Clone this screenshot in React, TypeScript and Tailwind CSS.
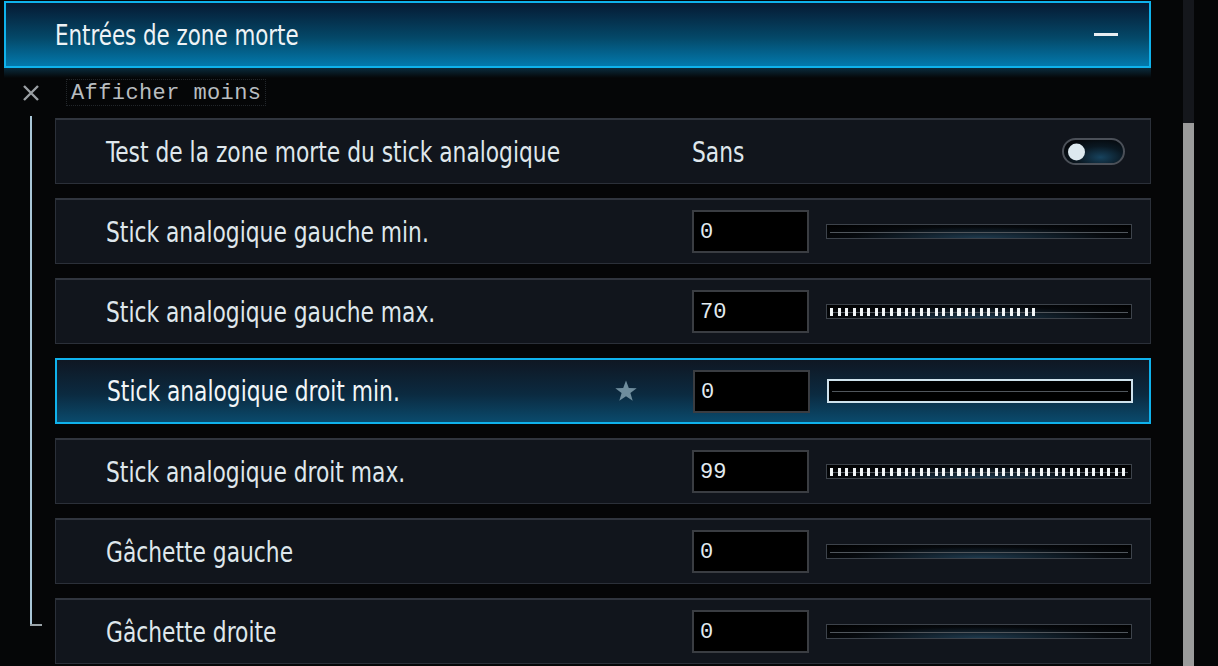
import React from "react";

const rows: { label: string; value: string; fill: number; kind?: "toggle"; active?: boolean }[] = [
  { label: "Test de la zone morte du stick analogique", value: "Sans", fill: 0, kind: "toggle" },
  { label: "Stick analogique gauche min.", value: "0", fill: 0 },
  { label: "Stick analogique gauche max.", value: "70", fill: 68 },
  { label: "Stick analogique droit min.", value: "0", fill: 0, active: true },
  { label: "Stick analogique droit max.", value: "99", fill: 98 },
  { label: "Gâchette gauche", value: "0", fill: 0 },
  { label: "Gâchette droite", value: "0", fill: 0 },
];

const narrow = { fontFamily: '"Liberation Sans Narrow", "DejaVu Sans Condensed", "Roboto", sans-serif' };
const mono = { fontFamily: '"Liberation Mono", "DejaVu Sans Mono", monospace' };

function Slider({ fill, active }: { fill: number; active?: boolean }) {
  return (
    <div
      className={
        "relative w-[306px] bg-black " +
        (active
          ? "border-2 border-[#cfe2ec] h-[24px]"
          : "h-[15px] border border-[#3d434b] bg-[radial-gradient(ellipse_at_50%_100%,#1e3a4e_0%,#06090d_60%,#000_100%)]")
      }
    >
      <div className="absolute left-[3px] right-[3px] top-1/2 h-px bg-[#50565c]" />
      {fill > 0 && (
        <div
          className="absolute left-[3px] top-1/2 -translate-y-1/2 h-[8px] bg-[repeating-linear-gradient(90deg,#f2f6f8_0px,#f2f6f8_3px,transparent_3px,transparent_7.5px)]"
          style={{ width: `${fill}%` }}
        />
      )}
    </div>
  );
}

function Toggle() {
  return (
    <div className="relative w-[63px] h-[27px] rounded-full border-2 border-[#4b5058] bg-[radial-gradient(ellipse_at_62%_75%,#17435e_0%,#0a1822_45%,#05080c_80%)]">
      <div className="absolute left-[4px] top-1/2 -translate-y-1/2 w-[17px] h-[17px] rounded-full bg-[#dde9ef]" />
    </div>
  );
}

export default function App() {
  return (
    <div className="relative w-[1218px] h-[666px] overflow-hidden bg-[#050607] flex" style={narrow}>
      <div className="w-[1160px] flex flex-col">
        {/* header */}
        <div className="ml-[4px] mt-px w-[1147px] h-[67px] border-2 border-[#0fb2ec] bg-[linear-gradient(180deg,#061a33_0%,#044868_55%,#0279ad_100%)] flex items-center justify-between pl-[49px] pr-[31px]">
          <span
            className="inline-block origin-left scale-x-[0.82] mt-[2px] text-[29px] text-[#eef3f6] whitespace-nowrap"
            style={narrow}
          >
            Entrées de zone morte
          </span>
          <span className="w-[24px] h-[3px] bg-[#e8eef2]" />
        </div>
        <div className="ml-[4px] w-[1147px] h-[10px] bg-[linear-gradient(180deg,#0a2b3c_0%,rgba(5,6,7,0)_100%)]" />
        {/* afficher moins */}
        <div className="h-[40px] flex items-start pl-[21px]">
          <svg width="20" height="20" viewBox="0 0 20 20" className="mt-[5px]">
            <path d="M3 3 L17 17 M17 3 L3 17" stroke="#9a9fa3" strokeWidth="2.4" />
          </svg>
          <span
            className="ml-[25px] mt-[1px] px-[4px] h-[27px] leading-[27px] text-[22px] tracking-[0.4px] text-[#b8bdc0] border border-dotted border-[#23272b]"
            style={mono}
          >
            Afficher moins
          </span>
        </div>
        {/* rows */}
        <div className="relative flex flex-col gap-[14px] pl-[55px]">
          <div className="absolute left-[30px] top-[-2px] w-[2px] h-[510px] bg-[#a9c6d6]" />
          <div className="absolute left-[30px] top-[506px] w-[12px] h-[2px] bg-[#9aa3a8]" />
          {rows.map((r, i) => (
            <div
              key={i}
              className={
                "w-[1096px] h-[66px] flex items-center " +
                (r.active
                  ? "border-2 border-[#0fb2ec] bg-[linear-gradient(180deg,#0f1723_0%,#0b2a40_55%,#0a4a6c_100%)]"
                  : "border border-[#2b3039] border-t-2 border-t-[#30353e] bg-[#11151c]")
              }
            >
              <div className="w-[636px] pl-[50px] pr-[55px] flex items-center justify-between">
                <span
                  className={
                    "inline-block origin-left scale-x-[0.865] mt-[2px] text-[28px] whitespace-nowrap " +
                    (r.active ? "text-[#f2f6f8]" : "text-[#dfe7ec]")
                  }
                  style={narrow}
                >
                  {r.label}
                </span>
                {r.active && (
                  <svg width="24" height="24" viewBox="0 0 24 24">
                    <path
                      d="M12 1.5 L14.8 9 L22.7 9.2 L16.4 14.1 L18.7 21.8 L12 17.3 L5.3 21.8 L7.6 14.1 L1.3 9.2 L9.2 9 Z"
                      fill="#6f8d9d"
                    />
                  </svg>
                )}
              </div>
              {r.kind === "toggle" ? (
                <div className="flex-1 flex items-center justify-between pr-[25px]">
                  <span
                    className="inline-block origin-left scale-x-[0.865] mt-[2px] text-[28px] text-[#dfe7ec]"
                    style={narrow}
                  >
                    {r.value}
                  </span>
                  <Toggle />
                </div>
              ) : (
                <div className="flex items-center gap-[17px]">
                  <div className="w-[117px] h-[43px] bg-black border-2 border-[#3a3d42] flex items-center pl-[6px]">
                    <span className="text-[22px] mt-[2px] text-[#e3ecf1]" style={mono}>
                      {r.value}
                    </span>
                  </div>
                  <Slider fill={r.fill} active={r.active} />
                </div>
              )}
            </div>
          ))}
        </div>
      </div>
      {/* scrollbar */}
      <div className="ml-[23px] w-[11px] h-full flex flex-col">
        <div className="h-[123px] bg-[#15171c]" />
        <div className="flex-1 bg-[#9b9b9b]" />
      </div>
    </div>
  );
}
